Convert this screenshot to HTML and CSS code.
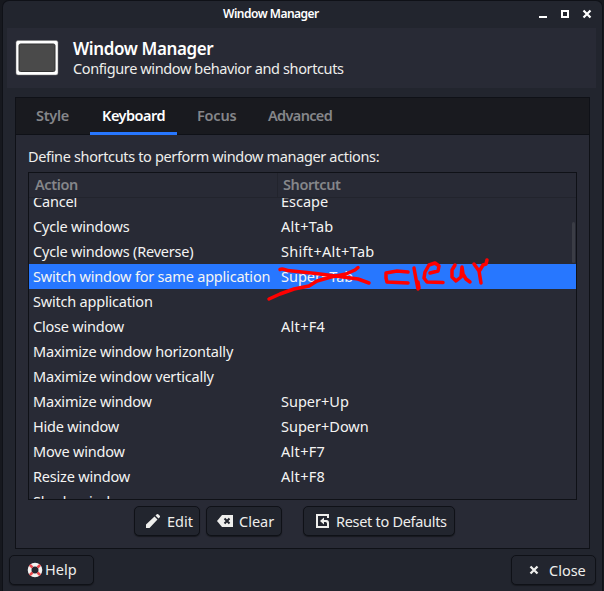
FILE: index.html
```html
<!DOCTYPE html>
<html lang="en">
<head>
<meta charset="utf-8">
<title>Window Manager</title>
<link rel="stylesheet" href="styles.css">
</head>
<body>
<div class="window">
  <div class="titlebar">
    <span class="title">Window Manager</span>
    <svg class="controls" width="54" height="10" viewBox="0 0 54 10">
      <path d="M0 7h8v2H0z" fill="#fff"/>
      <rect x="23" y="2" width="6" height="6" fill="none" stroke="#fff" stroke-width="2"/>
      <path d="M44.500 1.500l7 7M51.500 1.500l-7 7" stroke="#fff" stroke-width="2.200"/>
    </svg>
  </div>
  <header class="heading">
    <svg width="44" height="37" viewBox="0 0 44 37">
      <rect x="1" y="1.500" width="42" height="34.500" rx="2" fill="#fff" stroke="#777" stroke-width=".5"/>
      <rect x="4" y="5" width="36" height="27.500" rx="1.500" fill="#4a4a4a" stroke="#333"/>
    </svg>
    <div class="heading-text">
      <h1>Window Manager</h1>
      <p>Configure window behavior and shortcuts</p>
    </div>
  </header>
  <main class="notebook">
    <nav class="tabs">
      <span class="tab style">Style</span>
      <span class="tab keyboard active">Keyboard</span>
      <span class="tab focus">Focus</span>
      <span class="tab advanced">Advanced</span>
    </nav>
    <div class="page">
      <p class="intro">Define shortcuts to perform window manager actions:</p>
      <div class="list">
        <div class="list-head"><span>Action</span><span>Shortcut</span></div>
        <div class="rows">
          <div class="row"><span>Cancel</span><span>Escape</span></div>
          <div class="row"><span>Cycle windows</span><span class="alt">Alt+Tab</span></div>
          <div class="row"><span>Cycle windows (Reverse)</span><span class="alt">Shift+Alt+Tab</span></div>
          <div class="row selected"><span>Switch window for same application</span><span>Super+Tab</span></div>
          <div class="row"><span>Switch application</span><span></span></div>
          <div class="row"><span>Close window</span><span class="alt">Alt+F4</span></div>
          <div class="row"><span>Maximize window horizontally</span><span></span></div>
          <div class="row"><span>Maximize window vertically</span><span></span></div>
          <div class="row"><span>Maximize window</span><span>Super+Up</span></div>
          <div class="row"><span>Hide window</span><span>Super+Down</span></div>
          <div class="row"><span>Move window</span><span class="alt">Alt+F7</span></div>
          <div class="row"><span>Resize window</span><span class="alt">Alt+F8</span></div>
          <div class="row"><span>Shade window</span><span></span></div>
        </div>
        <i class="scrollbar"></i>
      </div>
      <div class="actions">
        <button class="edit"><svg width="16" height="16" viewBox="0 0 16 16"><path d="M1 15v-3.500L9.500 3.500l3 3L4.500 15zM10.500 2.500l1.300-1.300q.7-.6 1.400 0l1.600 1.600q.6.700 0 1.400l-1.300 1.300z" fill="#eeeeec"/></svg><span>Edit</span></button>
        <button class="clear"><svg width="16" height="16" viewBox="0 0 16 16"><path fill="#eeeeec" d="M0 8l5-6h11v12H5z"/><path d="M7.500 5.500l5 5M12.500 5.500l-5 5" stroke="#22252e" stroke-width="2"/></svg><span>Clear</span></button>
        <button class="reset"><svg width="14" height="16" viewBox="0 0 14 16"><path d="M12 5V2H1v12h11v-3" fill="none" stroke="#eeeeec" stroke-width="2"/><path d="M4 8l4-3.500V7h2.500Q13 7 13 10v3h-2v-2.500Q11 9 9.500 9H8v2.500z" fill="#eeeeec"/></svg><span>Reset to Defaults</span></button>
      </div>
    </div>
  </main>
  <footer class="footer">
    <button class="help"><svg width="16" height="16" viewBox="0 0 16 16"><circle cx="8" cy="8" r="5.400" fill="none" stroke="#f2f2f0" stroke-width="3.800"/><g stroke="#e8484c" stroke-width="2.600"><path d="M2.800 2.800l2.700 2.700M13.200 2.800l-2.700 2.700M2.800 13.200l2.700-2.700M13.200 13.200l-2.700-2.700"/></g></svg><span>Help</span></button>
    <button class="close"><svg width="10" height="10" viewBox="0 0 10 10"><path d="M1.500 1.500l7 7M8.500 1.500l-7 7" stroke="#eeeeec" stroke-width="2.300"/></svg><span>Close</span></button>
  </footer>
  <svg class="ink" width="230" height="50" viewBox="265 255 230 50" fill="none" stroke="#f00" stroke-width="3.500" stroke-linecap="round" stroke-linejoin="round">
    <path d="M280 269.500c3-2 5 1 10 1.300l26 2.700 27 3.500 15 2 11 4"/>
    <path d="M269 299l11-5 14-5 15-3 8-5 14-4 15-3 9-4 3-2.500"/>
    <path d="M408 272l-11-1-11 2 0 5 1 4 21 1"/>
    <path d="M414 268l2 11 2 10M418 282l1 6"/>
    <path d="M430 273l8-2 1-5-4-3-6 2-4 7-1 6 3 4 16 0.500"/>
    <path d="M455 265l-3 5 0 7 4 4 5-4 1-10 1 7 3 5 4 3"/>
    <path d="M474 264l5 7 2 12M480 270l3-5 3-1 1-4"/>
  </svg>
</div>
</body>
</html>
```
FILE: styles.css
```css
* { box-sizing: border-box; }
body { margin: 0; background: #16181e; font: 14.500px/20px "Noto Sans", sans-serif; color: #eeeeec; overflow: hidden; }
h1, p { margin: 0; font-weight: 400; }
svg { display: block; flex: none; }
.window { position: relative; width: 601px; height: 591px; margin-left: 2px; padding: 0 4px; border: solid #0f1117; border-width: 1px 1px 0; border-radius: 7px 7px 0 0; background: #22252e; display: flex; flex-direction: column; }
.titlebar { height: 27px; display: flex; align-items: center; justify-content: flex-end; padding-right: 5px; }
.title { flex: 1; padding: 0 0 2px 216px; font-size: 12px; letter-spacing: -.5px; font-weight: 600; color: #fff; }
.controls { margin-bottom: 2px; }
.heading { height: 60px; margin-right: 2px; background: #282a35; display: flex; padding: 11px 8px; gap: 14px; }
.heading-text { white-space: nowrap; letter-spacing: -.38px; }
.heading h1 { font-size: 17px; line-height: 20px; font-weight: 600; color: #fff; }
.heading p { line-height: 19px; }
.notebook { flex: none; margin: 9px 8px 0; width: 575px; height: 452px; border: 1px solid #0f1117; background: #282a35; }
.tabs { height: 37px; background: #191a1f; border-bottom: 1px solid #0f1117; display: flex; gap: 8px; padding-left: 8px; }
.tab { padding: 7px 0 0 12px; height: 37px; font-weight: 600; letter-spacing: -.5px; color: #85868a; }
.style { width: 58px; letter-spacing: -.3px; }
.keyboard { width: 87px; }
.focus { width: 63px; letter-spacing: -.2px; }
.advanced { width: 90px; letter-spacing: -.65px; }
.tab.active { color: #fff; border-bottom: 3px solid #2777ff; }
.page { padding: 11px 12px 12px; }
.intro { height: 26px; letter-spacing: -.35px; }
.list { position: relative; height: 328px; border: 1px solid #0f1117; overflow: hidden; }
.list-head { height: 25px; border-bottom: 1px solid #22242d; display: grid; grid-template-columns: 248px 1fr; color: #85868a; font-weight: 600; letter-spacing: -.4px; line-height: 22px; }
.list-head span { padding-left: 6px; }
.list-head span + span { border-left: 1px solid #22242d; padding-left: 5px; }
.rows { height: 301px; overflow: hidden; display: flex; flex-direction: column; }
.row { flex: none; height: 25px; line-height: 25px; letter-spacing: -.2px; display: grid; grid-template-columns: 248px 1fr; padding-left: 4px; white-space: nowrap; color: #f4f4f3; }
.row span + span { letter-spacing: 0; }
.row span.alt { letter-spacing: .3px; }
.row:first-child { margin-top: -9px; }
.selected { background: #2777ff; }
.scrollbar { position: absolute; right: 1px; top: 49px; width: 3px; height: 41px; border-radius: 2px; background: #3b3d46; }
.actions { display: flex; padding: 6px 0 0 106px; }
button { height: 30px; border: 1px solid #0f1117; border-radius: 5px; background: #22252e; color: #eeeeec; font: inherit; display: flex; align-items: center; padding: 0; white-space: nowrap; box-shadow: 0 1px 1px #17191f; }
.edit { width: 66px; padding-left: 10px; gap: 6px; }
.clear { width: 76px; margin-left: 6px; padding-left: 10px; gap: 6px; }
.reset { width: 152px; margin-left: 21px; padding-left: 12px; gap: 6px; letter-spacing: -.3px; }
.footer { display: flex; justify-content: space-between; padding: 6px 2px 0; width: 591px; }
.help { width: 85px; padding-left: 17px; gap: 2px; }
.help span { margin-top: -2px; }
.close { width: 85px; padding-left: 17px; gap: 10px; }
.ink { position: absolute; left: 262px; top: 254px; }
```
